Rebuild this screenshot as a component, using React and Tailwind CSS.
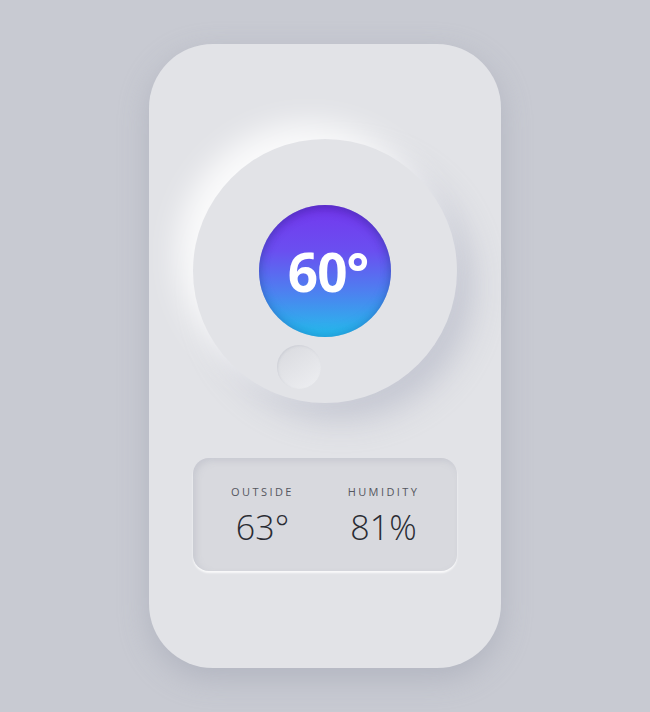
export default function App() {
  return (
    <div className="min-h-screen w-full bg-[#c8cad2] flex items-center justify-center" style={{ fontFamily: '"Open Sans", "Noto Sans", sans-serif' }}>
      <div className="w-[352px] h-[624px] rounded-[64px] bg-[#e2e3e7] shadow-[0_10px_30px_rgba(150,155,170,0.45)] flex flex-col items-center pt-[95px]">
        <div className="relative w-[264px] h-[264px] rounded-full bg-[#e2e3e7] shadow-[-16px_-16px_30px_rgba(255,255,255,0.85),16px_16px_32px_rgba(160,165,185,0.45)] flex items-center justify-center">
          <div className="w-[132px] h-[132px] rounded-full bg-[linear-gradient(180deg,#7437ee_0%,#6a4ff0_35%,#4e7ff0_65%,#25bdec_100%)] shadow-[inset_0_4px_10px_rgba(60,20,140,0.45),inset_0_-4px_10px_rgba(20,150,210,0.4)] flex items-center justify-center">
            <span className="text-white font-bold text-[53px] leading-none tracking-[-1px] pl-[6px]">60°</span>
          </div>
          <div className="absolute left-[84px] top-[206px] w-[44px] h-[44px] rounded-full bg-[linear-gradient(145deg,#d8d9de,#eeeff2)] shadow-[inset_1px_1px_2px_rgba(180,183,195,0.35)]" />
        </div>
        <div className="mt-[55px] w-[264px] h-[113px] rounded-[16px] bg-[#d8d9de] shadow-[inset_3px_3px_6px_rgba(170,172,185,0.35),0_2px_2px_rgba(255,255,255,0.8)] flex items-center justify-center gap-[31px] pr-[4px]">
          <div className="flex flex-col items-center w-[90px]">
            <span className="text-[11px] tracking-[0.22em] text-[#555760] leading-none">OUTSIDE</span>
            <span className="mt-[13px] text-[34px] font-light text-[#2a2c33] leading-none">63°</span>
          </div>
          <div className="flex flex-col items-center w-[90px]">
            <span className="text-[11px] tracking-[0.22em] text-[#555760] leading-none">HUMIDITY</span>
            <span className="mt-[13px] text-[34px] font-light text-[#2a2c33] leading-none">81%</span>
          </div>
        </div>
      </div>
    </div>
  );
}
